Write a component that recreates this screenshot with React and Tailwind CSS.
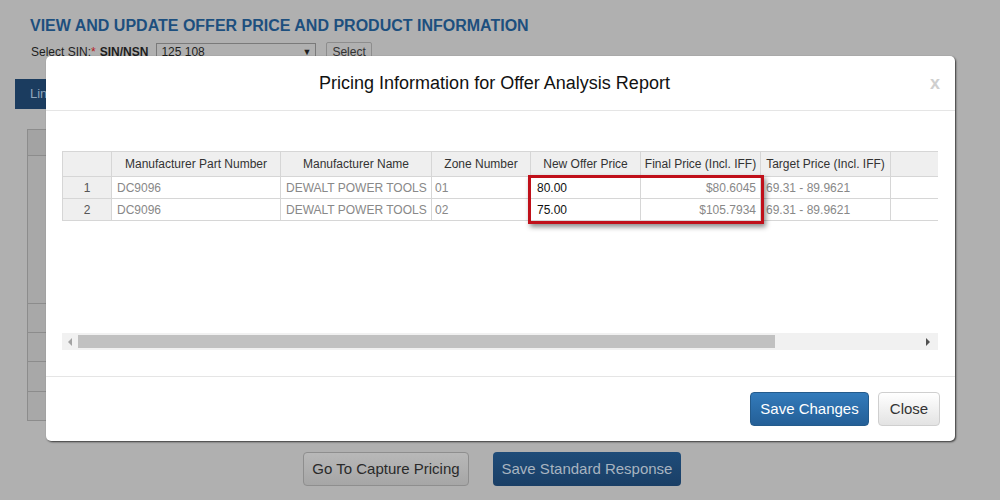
const COLS = [
  { label: '', w: 'w-[49px]' },
  { label: 'Manufacturer Part Number', w: 'w-[169px]' },
  { label: 'Manufacturer Name', w: 'w-[151px]' },
  { label: 'Zone Number', w: 'w-[99px]' },
  { label: 'New Offer Price', w: 'w-[110px]' },
  { label: 'Final Price (Incl. IFF)', w: 'w-[120px]' },
  { label: 'Target Price (Incl. IFF)', w: 'w-[130px]' },
  { label: '', w: 'w-[48px]' },
]

const ROWS = [
  { n: 1, part: 'DC9096', name: 'DEWALT POWER TOOLS', zone: '01', offer: '80.00', final: '$80.6045', target: '69.31 - 89.9621' },
  { n: 2, part: 'DC9096', name: 'DEWALT POWER TOOLS', zone: '02', offer: '75.00', final: '$105.7934', target: '69.31 - 89.9621' },
]

function BackgroundPage() {
  return (
    <div className="flex flex-col">
      <h1 className="pl-[30px] pt-[16px] text-[16px] leading-[20px] font-bold text-[#1d4f7e]">
        VIEW AND UPDATE OFFER PRICE AND PRODUCT INFORMATION
      </h1>
      <div className="mt-[6px] pl-[31px] flex items-center text-[12px] leading-[16px] text-[#1e1e1e]">
        <span>Select SIN:</span>
        <span className="text-[#b51c1c]">*</span>
        <span className="ml-[4px] font-bold">SIN/NSN</span>
        <div className="ml-[8px] w-[160px] h-[17px] border border-[#7a7a7a] flex items-center justify-between px-[4px]">
          <span>125 108</span>
          <span className="text-[9px]">▼</span>
        </div>
        <div className="ml-[10px] h-[19px] px-[5px] border border-[#8d8d8d] rounded-[2px] flex items-center text-[#333]">Select</div>
      </div>
      <div className="mt-[18px] ml-[15px] w-[100px] h-[30px] bg-[#1b3c5f] text-[#8fa6bd] text-[13px] flex items-center pl-[15px]">Line Items</div>
      <div className="mt-[20px] ml-[27px] w-[100px] border border-[#8c8c8c] bg-[#a8a8a8] flex flex-col">
        <div className="h-[26px] border-b border-[#8c8c8c] bg-[#a3a3a3]" />
        <div className="h-[148px] border-b border-[#8c8c8c]" />
        <div className="h-[29px] border-b border-[#8c8c8c]" />
        <div className="h-[29px] border-b border-[#8c8c8c]" />
        <div className="h-[30px] border-b border-[#8c8c8c]" />
        <div className="h-[28px]" />
      </div>
      <div className="mt-[31px] pl-[303px] flex gap-[24px] text-[15px]">
        <div className="w-[166px] h-[34px] rounded-[4px] border border-[#8e8e8e] bg-gradient-to-b from-[#b8b8b8] to-[#a6a6a6] flex items-center justify-center text-[#2a2a2a]">
          Go To Capture Pricing
        </div>
        <div className="w-[188px] h-[34px] rounded-[4px] bg-gradient-to-b from-[#1f4c79] to-[#1a3f66] flex items-center justify-center text-[#a8b4c0]">
          Save Standard Response
        </div>
      </div>
    </div>
  )
}

function PriceTable() {
  return (
    <div className="relative w-[876px]">
      <div className="border-b border-[#d6d6d6]">
        <div className="flex h-[25px] bg-[#efefef] border-t border-[#d6d6d6]">
          {COLS.map((c, i) => (
            <div
              key={i}
              className={`${c.w} shrink-0 border-l border-[#d6d6d6] flex items-center justify-center text-[12px] text-[#333]`}
            >
              {c.label}
            </div>
          ))}
        </div>
        {ROWS.map(r => (
          <div key={r.n} className="flex h-[22px] border-t border-[#d6d6d6] text-[12px] text-[#888]">
            <div className="w-[49px] shrink-0 bg-[#efefef] border-l border-[#d6d6d6] flex items-center justify-center text-[#555]">{r.n}</div>
            <div className="w-[169px] shrink-0 border-l border-[#d6d6d6] flex items-center pl-[5px]">{r.part}</div>
            <div className="w-[151px] shrink-0 border-l border-[#d6d6d6] flex items-center pl-[5px]">{r.name}</div>
            <div className="w-[99px] shrink-0 border-l border-[#d6d6d6] flex items-center pl-[3px]">{r.zone}</div>
            <div className="w-[110px] shrink-0 border-l border-[#d6d6d6] flex items-center pl-[6px] text-[#111]">{r.offer}</div>
            <div className="w-[120px] shrink-0 border-l border-[#d6d6d6] flex items-center justify-end pr-[4px]">{r.final}</div>
            <div className="w-[130px] shrink-0 border-l border-[#d6d6d6] flex items-center pl-[5px]">{r.target}</div>
            <div className="w-[48px] shrink-0 border-l border-[#d6d6d6]" />
          </div>
        ))}
      </div>
      {/* highlight box */}
      <div className="absolute left-[466px] top-[24px] w-[236px] h-[49px] border-[3px] border-[#c0101a] shadow-[2px_3px_5px_rgba(0,0,0,0.45)]" />
    </div>
  )
}

function Scrollbar() {
  return (
    <div className="w-[876px] h-[17px] bg-[#f1f1f1] flex items-center">
      <div className="w-[16px] h-full flex items-center justify-center">
        <div className="w-0 h-0 border-y-[4px] border-y-transparent border-r-[4px] border-r-[#a3a3a3]" />
      </div>
      <div className="w-[697px] h-[13px] bg-[#c1c1c1]" />
      <div className="flex-1" />
      <div className="w-[20px] h-full flex items-center justify-center">
        <div className="w-0 h-0 border-y-[4px] border-y-transparent border-l-[4px] border-l-[#505050]" />
      </div>
    </div>
  )
}

function Modal() {
  return (
    <div className="absolute left-[46px] top-[56px] w-[909px] h-[385px] bg-white rounded-[5px] shadow-[1px_1px_2px_rgba(0,0,0,0.7)] flex flex-col">
      <div className="relative h-[55px] border-b border-[#e5e5e5] flex items-center justify-center">
        <h2 className="text-[18px] text-[#111] pr-[12px]">Pricing Information for Offer Analysis Report</h2>
        <span className="absolute right-[15px] top-[14px] text-[18px] font-bold text-[#cfcfcf]">x</span>
      </div>
      <div className="h-[265px] pl-[16px] pt-[40px]">
        <PriceTable />
        <div className="mt-[112px]">
          <Scrollbar />
        </div>
      </div>
      <div className="flex-1 border-t border-[#e5e5e5] flex justify-end items-start gap-[9px] pr-[15px] pt-[15px] text-[15px]">
        <div className="w-[119px] h-[34px] rounded-[4px] border border-[#245b8c] bg-gradient-to-b from-[#337bbb] to-[#245f97] text-white flex items-center justify-center">
          Save Changes
        </div>
        <div className="w-[62px] h-[34px] rounded-[4px] border border-[#cfcfcf] bg-gradient-to-b from-white to-[#e3e3e3] text-[#333] flex items-center justify-center">
          Close
        </div>
      </div>
    </div>
  )
}

export default function App() {
  return (
    <div className="relative w-[1000px] h-[500px] overflow-hidden bg-[#b0b0b0] font-['Liberation_Sans',Arial,sans-serif]">
      <BackgroundPage />
      <Modal />
    </div>
  )
}
